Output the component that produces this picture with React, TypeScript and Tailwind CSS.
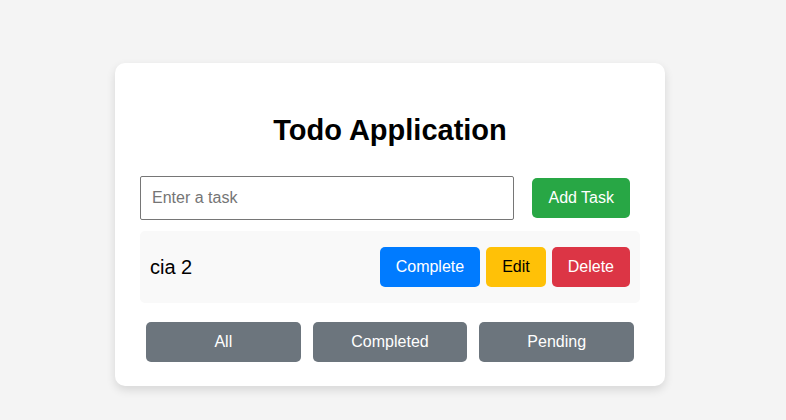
import { useState } from "react";

type Filter = "all" | "completed" | "pending";

interface Task {
  id: number;
  text: string;
  done: boolean;
}

export default function App() {
  const [tasks] = useState<Task[]>([{ id: 1, text: "cia 2", done: false }]);
  const [filter, setFilter] = useState<Filter>("all");
  const [draft, setDraft] = useState("");

  const visible = tasks.filter((t) =>
    filter === "all" ? true : filter === "completed" ? t.done : !t.done
  );

  return (
    <div className="min-h-[420px] bg-[#f4f4f4] pt-[63px] font-['Liberation_Sans',Arial,sans-serif] text-black">
      <div className="ml-[115px] w-[550px] rounded-[10px] bg-white px-[25px] pt-[25px] pb-[24px] shadow-[0_4px_10px_rgba(0,0,0,0.12)]">
        {/* Title */}
        <h1 className="mt-[25px] text-center text-[29px] leading-[34px] font-bold">
          Todo Application
        </h1>

        {/* Input row */}
        <div className="mt-[29px] flex items-center justify-between pr-[10px]">
          <input
            value={draft}
            onChange={(e) => setDraft(e.target.value)}
            placeholder="Enter a task"
            className="h-[44px] w-[374px] rounded-[2px] border border-[#767676] bg-white px-[11px] text-[16px] text-black outline-none placeholder:text-[#757575]"
          />
          <button className="h-[40px] rounded-[5px] bg-[#28a745] px-[16px] text-[16px] text-white">
            Add Task
          </button>
        </div>

        {/* Task list */}
        <ul className="mt-[11px]">
          {visible.map((t) => (
            <li
              key={t.id}
              className="flex h-[72px] items-center justify-between rounded-[5px] bg-[#f9f9f9] px-[10px]"
            >
              <span className="text-[20px]">{t.text}</span>
              <div className="flex gap-[6px]">
                <button className="h-[40px] rounded-[5px] bg-[#007bff] px-[16px] text-[16px] text-white">
                  Complete
                </button>
                <button className="h-[40px] rounded-[5px] bg-[#ffc107] px-[16px] text-[16px] text-black">
                  Edit
                </button>
                <button className="h-[40px] rounded-[5px] bg-[#dc3545] px-[16px] text-[16px] text-white">
                  Delete
                </button>
              </div>
            </li>
          ))}
        </ul>

        {/* Filters */}
        <div className="mt-[19px] flex gap-[12px] px-[6px]">
          <button
            onClick={() => setFilter("all")}
            className="h-[40px] flex-1 rounded-[5px] bg-[#6c757d] text-[16px] text-white"
          >
            All
          </button>
          <button
            onClick={() => setFilter("completed")}
            className="h-[40px] flex-1 rounded-[5px] bg-[#6c757d] text-[16px] text-white"
          >
            Completed
          </button>
          <button
            onClick={() => setFilter("pending")}
            className="h-[40px] flex-1 rounded-[5px] bg-[#6c757d] text-[16px] text-white"
          >
            Pending
          </button>
        </div>
      </div>
    </div>
  );
}
